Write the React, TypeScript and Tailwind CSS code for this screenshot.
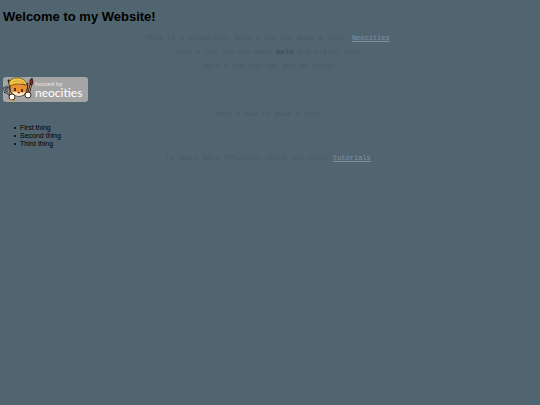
const links = {
  home: "https://neocities.org",
  tutorials: "https://neocities.org/tutorials",
};

const items = ["First thing", "Second thing", "Third thing"];

const linkStyle = "text-[#8490a2] underline";

function HostedBadge() {
  return (
    <svg
      viewBox="0 0 85 26"
      className="block h-[26px] w-[85px]"
      role="img"
      aria-label="hosted by neocities"
    >
      <rect x="0" y="0" width="85" height="25" rx="3" fill="#a5a5a5" />

      {/* fork */}
      <path d="M1 10l1 5 3 1M3 9l3 7M6 9l-1 7 3 4" fill="none" stroke="#1c1c1c" strokeWidth="2" />
      <path d="M1 10l1 5 3 1M3 9l3 7M6 9l-1 7 3 4" fill="none" stroke="#b4bcc4" strokeWidth="0.7" />

      {/* brush */}
      <path d="M25 18L28 7" stroke="#2a1a12" strokeWidth="2.6" />
      <path d="M25 17L28 8" stroke="#c99a62" strokeWidth="1" />
      <path d="M27 7V3l2-2 1 4-1 3z" fill="#8c2020" stroke="#2a1010" strokeWidth="0.8" />

      {/* face */}
      <path
        d="M7 10L5 3l5 1 12 4 3-2-1 7c0 4-4 6-8 6s-8-2-9-6z"
        fill="#e98f34"
        stroke="#241a10"
        strokeWidth="1"
      />
      <path d="M9 15c3 1 5-1 7 1 3-1 4 0 6-1-1 3-3 4-6 4s-6-1-7-4z" fill="#ffe9cf" />
      <path d="M12 11v3M19 12v3" stroke="#1c1410" strokeWidth="1.5" />
      <path d="M14 15h3l-1 2z" fill="#7b2c1c" />

      {/* hat */}
      <path
        d="M6 7c0-3 3-6 7-6 5-1 10 2 11 7-5-1-12-2-17 1z"
        fill="#f2c744"
        stroke="#6a4a18"
        strokeWidth="0.8"
      />
      <path d="M10 5c4-2 8-1 11 1" fill="none" stroke="#c8922c" strokeWidth="0.8" />

      {/* paws */}
      <circle cx="9" cy="20" r="3" fill="#fff" stroke="#3a2a18" strokeWidth="1" />
      <circle cx="25" cy="18" r="3" fill="#fff" stroke="#3a2a18" strokeWidth="1" />
      <path d="M7 22l4 3" stroke="#d98a32" strokeWidth="1.5" />

      <text x="32" y="9" fontSize="6" fill="#eee" className="font-['Open_Sans',sans-serif]">
        hosted by
      </text>
      <text x="32" y="20" fontSize="12" fill="#fff" className="font-['Lato',sans-serif]">
        neocities
      </text>
    </svg>
  );
}

export default function App() {
  return (
    <div className="min-h-screen bg-[#50656f] px-[3px] pt-2 font-['Liberation_Sans',Arial,sans-serif] text-[7px] leading-[8px] text-black">
      <h1 className="text-[13px] leading-[18px] font-bold">Welcome to my Website!</h1>

      {/* intro */}
      <div className="mt-2 space-y-[6px] text-center font-['Liberation_Mono','Courier_New',monospace] text-[#485b65]">
        <p>
          This is a paragraph! Here's how you make a link:{" "}
          <a href={links.home} className={linkStyle}>
            Neocities
          </a>
          .
        </p>
        <p>
          Here's how you can make <strong className="text-[#3f515a]">bold</strong> and{" "}
          <em>italic</em> text.
        </p>
        <p>Here's how you can add an image:</p>
      </div>

      <div className="mt-[7px]">
        <HostedBadge />
      </div>

      {/* list */}
      <p className="mt-[7px] text-center font-['Liberation_Mono','Courier_New',monospace] text-[#485b65]">
        Here's how to make a list:
      </p>
      <ul className="mt-[6px] pl-[11px]">
        {items.map((item) => (
          <li
            key={item}
            className="flex items-center gap-1 before:size-[2px] before:rounded-full before:bg-black before:content-['']"
          >
            {item}
          </li>
        ))}
      </ul>

      <p className="mt-[6px] text-center font-['Liberation_Mono','Courier_New',monospace] text-[#485b65]">
        To learn more HTML/CSS, check out these{" "}
        <a href={links.tutorials} className={linkStyle}>
          tutorials
        </a>
        !
      </p>
    </div>
  );
}
